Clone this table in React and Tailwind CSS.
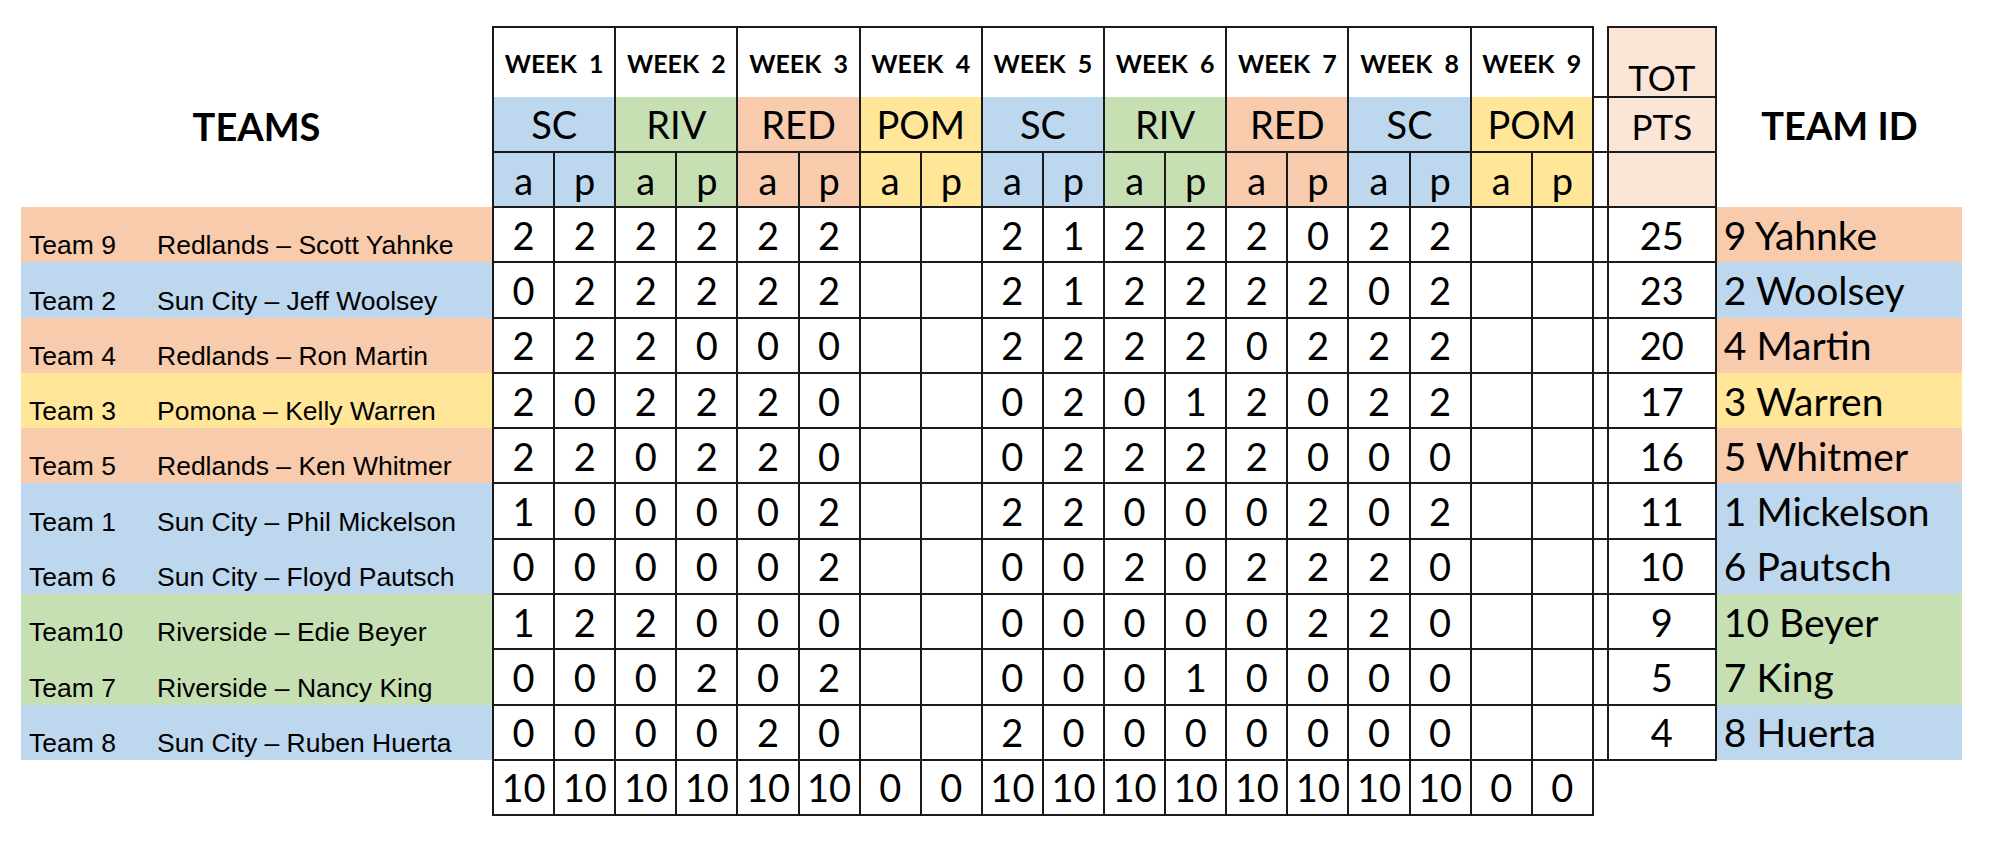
import React from 'react';

const LINE = 'border-[#1a1a1a]';

const FILL = {
  SC: 'bg-[#bdd7ee]',
  RIV: 'bg-[#c6e0b4]',
  RED: 'bg-[#f8cbad]',
  POM: 'bg-[#ffe699]',
};

const WEEKS = ['SC', 'RIV', 'RED', 'POM', 'SC', 'RIV', 'RED', 'SC', 'POM'];

const TEAMS = [
  { team: 'Team 9', name: 'Redlands – Scott Yahnke', club: 'RED', id: '9 Yahnke', tot: 25, pts: [2, 2, 2, 2, 2, 2, '', '', 2, 1, 2, 2, 2, 0, 2, 2, '', ''] },
  { team: 'Team 2', name: 'Sun City – Jeff Woolsey', club: 'SC', id: '2 Woolsey', tot: 23, pts: [0, 2, 2, 2, 2, 2, '', '', 2, 1, 2, 2, 2, 2, 0, 2, '', ''] },
  { team: 'Team 4', name: 'Redlands – Ron Martin', club: 'RED', id: '4 Martin', tot: 20, pts: [2, 2, 2, 0, 0, 0, '', '', 2, 2, 2, 2, 0, 2, 2, 2, '', ''] },
  { team: 'Team 3', name: 'Pomona – Kelly Warren', club: 'POM', id: '3 Warren', tot: 17, pts: [2, 0, 2, 2, 2, 0, '', '', 0, 2, 0, 1, 2, 0, 2, 2, '', ''] },
  { team: 'Team 5', name: 'Redlands – Ken Whitmer', club: 'RED', id: '5 Whitmer', tot: 16, pts: [2, 2, 0, 2, 2, 0, '', '', 0, 2, 2, 2, 2, 0, 0, 0, '', ''] },
  { team: 'Team 1', name: 'Sun City – Phil Mickelson', club: 'SC', id: '1 Mickelson', tot: 11, pts: [1, 0, 0, 0, 0, 2, '', '', 2, 2, 0, 0, 0, 2, 0, 2, '', ''] },
  { team: 'Team 6', name: 'Sun City – Floyd Pautsch', club: 'SC', id: '6 Pautsch', tot: 10, pts: [0, 0, 0, 0, 0, 2, '', '', 0, 0, 2, 0, 2, 2, 2, 0, '', ''] },
  { team: 'Team10', name: 'Riverside – Edie Beyer', club: 'RIV', id: '10 Beyer', tot: 9, pts: [1, 2, 2, 0, 0, 0, '', '', 0, 0, 0, 0, 0, 2, 2, 0, '', ''] },
  { team: 'Team 7', name: 'Riverside – Nancy King', club: 'RIV', id: '7 King', tot: 5, pts: [0, 0, 0, 2, 0, 2, '', '', 0, 0, 0, 1, 0, 0, 0, 0, '', ''] },
  { team: 'Team 8', name: 'Sun City – Ruben Huerta', club: 'SC', id: '8 Huerta', tot: 4, pts: [0, 0, 0, 0, 2, 0, '', '', 2, 0, 0, 0, 0, 0, 0, 0, '', ''] },
];

const TOTALS = [10, 10, 10, 10, 10, 10, 0, 0, 10, 10, 10, 10, 10, 10, 10, 10, 0, 0];

export default function App() {
  return (
    <div className="min-h-screen bg-white pt-[26px] pl-[21px]">
      <table className="w-[1941px] table-fixed border-collapse font-['Lato',sans-serif] text-[38px] leading-[46px] text-black">
        <colgroup>
          <col className="w-[472px]" />
          {TOTALS.map((_, i) => (
            <col key={i} className="w-[61.1px]" />
          ))}
          <col className="w-[15px]" />
          <col className="w-[108px]" />
          <col className="w-[246px]" />
        </colgroup>
        <tbody>
          {/* week row */}
          <tr className="h-[70px]">
            <td rowSpan={3} className="align-top pt-[76px] text-center text-[38px] font-bold leading-[46px]">
              TEAMS
            </td>
            {WEEKS.map((_, i) => (
              <td
                key={i}
                colSpan={2}
                className={`border-2 border-b-0 ${LINE} text-center text-[25px] font-bold whitespace-pre leading-[30px]`}
              >
                {`WEEK  ${i + 1}`}
              </td>
            ))}
            <td className={`border-x-2 border-b-2 ${LINE}`} />
            <td className={`border-2 ${LINE} bg-[#fbe5d6] align-bottom pb-0 text-center text-[35px] leading-[38px]`}>
              TOT
            </td>
            <td rowSpan={3} className="align-top pt-[75px] text-center text-[38px] font-bold leading-[46px]">
              TEAM ID
            </td>
          </tr>

          {/* school row */}
          <tr className="h-[55px]">
            {WEEKS.map((club, i) => (
              <td key={i} colSpan={2} className={`border-x-2 border-b-2 ${LINE} ${FILL[club]} text-center`}>
                {club}
              </td>
            ))}
            <td className={`border-x-2 border-b-2 ${LINE}`} />
            <td className={`border-2 ${LINE} bg-[#fbe5d6] text-center text-[35px] leading-[42px] pt-[3px]`}>PTS</td>
          </tr>

          {/* a / p row */}
          <tr className="h-[55px]">
            {WEEKS.flatMap((club, i) => [
              <td key={`a${i}`} className={`border-2 ${LINE} ${FILL[club]} text-center`}>a</td>,
              <td key={`p${i}`} className={`border-2 ${LINE} ${FILL[club]} text-center`}>p</td>,
            ])}
            <td className={`border-2 ${LINE}`} />
            <td className={`border-2 ${LINE} bg-[#fbe5d6]`} />
          </tr>

          {/* teams */}
          {TEAMS.map((t) => (
            <tr key={t.team} className="h-[55.3px]">
              <td className={`${FILL[t.club]} align-bottom pb-[2px] pl-[8px]`}>
                <div className="flex font-['Liberation_Sans',Arial,sans-serif] text-[26.5px] leading-[30px]">
                  <span className="w-[128px] shrink-0">{t.team}</span>
                  <span>{t.name}</span>
                </div>
              </td>
              {t.pts.map((p, i) => (
                <td key={i} className={`border-2 ${LINE} text-center`}>
                  {p}
                </td>
              ))}
              <td className={`border-2 ${LINE}`} />
              <td className={`border-2 ${LINE} text-center`}>{t.tot}</td>
              <td className={`${FILL[t.club]} pl-[7px] text-[39px] whitespace-nowrap`}>{t.id}</td>
            </tr>
          ))}

          {/* totals */}
          <tr className="h-[55px]">
            <td />
            {TOTALS.map((n, i) => (
              <td key={i} className={`border-2 ${LINE} text-center`}>
                {n}
              </td>
            ))}
            <td />
            <td />
            <td />
          </tr>
        </tbody>
      </table>
    </div>
  );
}
